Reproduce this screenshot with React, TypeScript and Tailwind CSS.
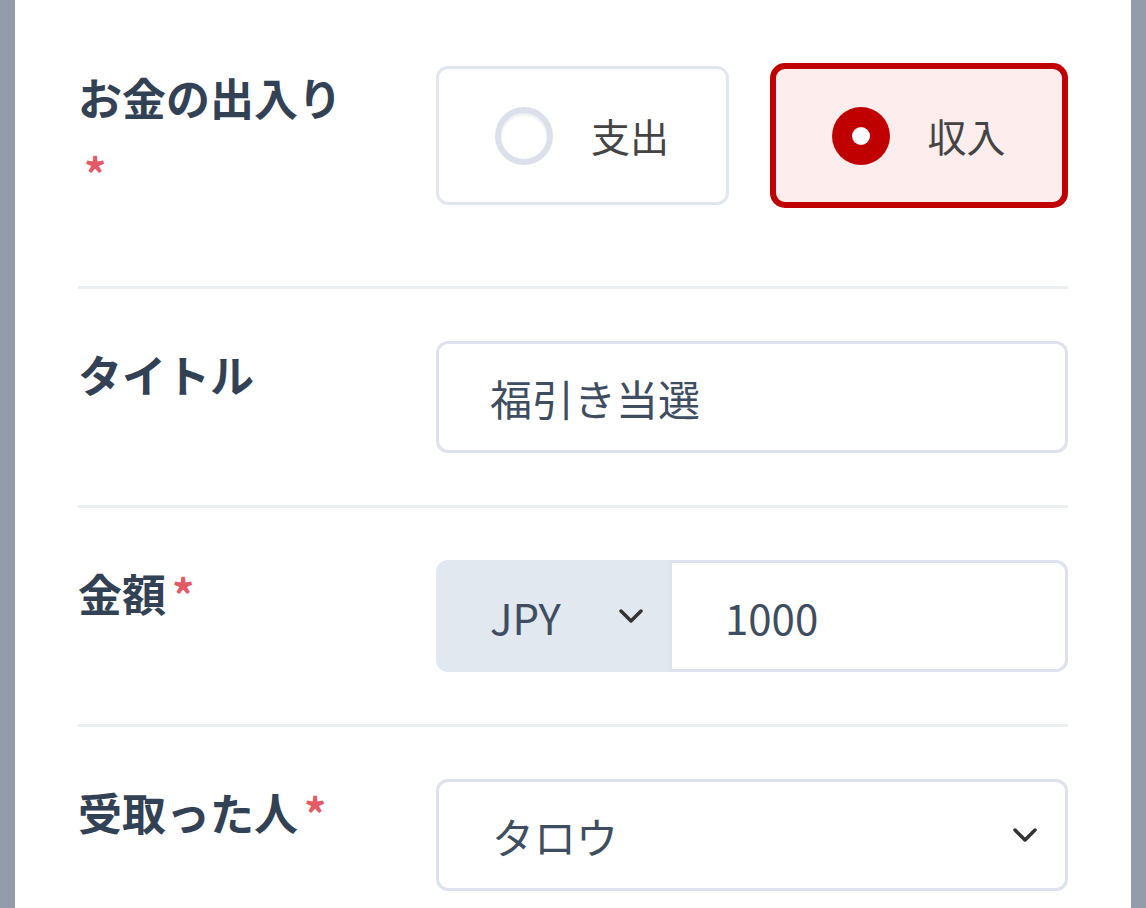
import React from 'react';

const Chevron: React.FC<{ className?: string }> = ({ className }) => (
    <svg className={className} width="24" height="14" viewBox="0 0 24 14" fill="none">
        <path d="M2 2l10 10L22 2" stroke="#333333" strokeWidth={3.5} strokeLinecap="round" strokeLinejoin="round" />
    </svg>
);

const Label: React.FC<{ text: string; required?: boolean }> = ({ text, required }) => (
    <div className="-mt-[4px] text-[44px] font-bold leading-[75px] text-[#334155]">
        {text}
        {required && <span className="ml-[6px] text-[#e25a66]">*</span>}
    </div>
);

const RadioCard: React.FC<{ label: string; checked?: boolean }> = ({ label, checked }) => (
    <div
        className={`flex h-[139px] items-center gap-[38px] rounded-[12px] border-[3px] pl-[56px] ${
            checked
                ? 'border-[#c00000] bg-[#fdeded] shadow-[0_0_0_3px_#c00000]'
                : 'border-[#e2e7ef] bg-white'
        }`}
    >
        {checked ? (
            <span className="flex h-[58px] w-[58px] items-center justify-center rounded-full bg-[#c00000]">
                <span className="h-[18px] w-[18px] rounded-full bg-white" />
            </span>
        ) : (
            <span className="h-[58px] w-[58px] rounded-full border-[6px] border-[#dbe0ea] bg-white shadow-[inset_0_2px_3px_rgba(0,0,0,0.08)]" />
        )}
        <span className="text-[39px] text-[#444444]">{label}</span>
    </div>
);

export default function App() {
    const row = 'grid grid-cols-[275px_1fr] gap-x-[83px] border-b-[3px] border-[#eceff2]';

    return (
        <div
            className="flex h-[908px] overflow-hidden bg-[#929cab]"
            style={{ fontFamily: '"Noto Sans CJK JP", "Noto Sans", sans-serif' }}
        >
            <div className="w-[15px] shrink-0" />
            <div className="flex-1 bg-white px-[63px]">
                {/* お金の出入り */}
                <div className={`${row} pt-[64px] pb-[76px]`}>
                    <Label text="お金の出入り" required />
                    <div className="mt-[2px] grid grid-cols-2 gap-x-[44px] pr-[3px]">
                        <RadioCard label="支出" />
                        <RadioCard label="収入" checked />
                    </div>
                </div>

                {/* タイトル */}
                <div className={`${row} py-[52px]`}>
                    <Label text="タイトル" />
                    <div className="flex h-[112px] items-center rounded-[12px] border-[3px] border-[#dde2ec] pl-[51px] text-[42px] text-[#3f4d61]">
                        福引き当選
                    </div>
                </div>

                {/* 金額 */}
                <div className={`${row} py-[52px]`}>
                    <Label text="金額" required />
                    <div className="flex h-[112px]">
                        <div className="flex w-[233px] items-center justify-between rounded-l-[12px] bg-[#e2e8f0] pr-[26px] pl-[54px] text-[42px] text-[#3f4d61]">
                            <span>JPY</span>
                            <Chevron />
                        </div>
                        <div className="flex flex-1 items-center rounded-r-[12px] border-[3px] border-[#dde2ec] pl-[53px] text-[42px] text-[#3f4d61]">
                            1000
                        </div>
                    </div>
                </div>

                {/* 受取った人 */}
                <div className={`${row} py-[52px]`}>
                    <Label text="受取った人" required />
                    <div className="flex h-[112px] items-center justify-between rounded-[12px] border-[3px] border-[#dde2ec] pr-[28px] pl-[53px] text-[42px] text-[#3f4d61]">
                        <span>タロウ</span>
                        <Chevron />
                    </div>
                </div>
            </div>
            <div className="w-[15px] shrink-0" />
        </div>
    );
}
